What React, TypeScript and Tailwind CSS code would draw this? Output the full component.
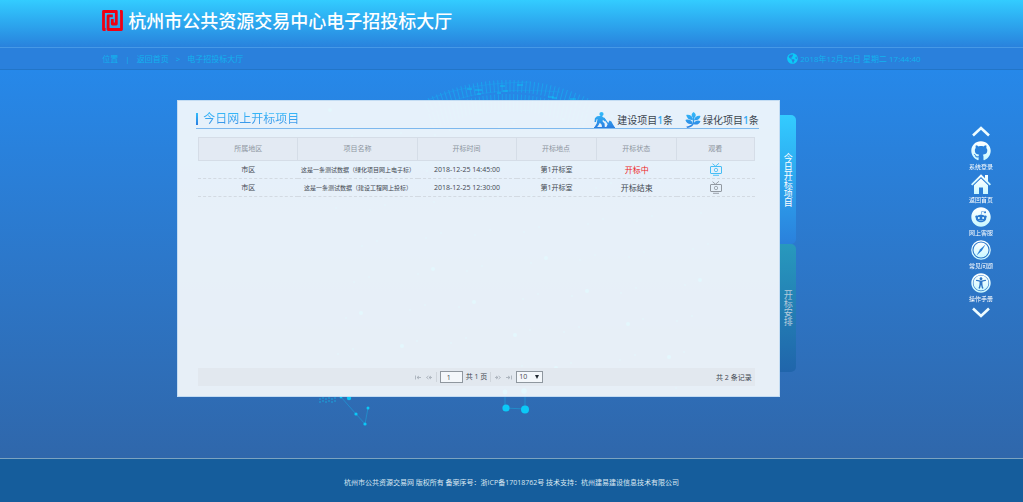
import { useState } from "react";
import { FaGithub, FaReddit, FaUniversalAccess, FaGlobeAmericas } from "react-icons/fa";

const columns = [
  { label: "所属地区", width: "w-[18%]" },
  { label: "项目名称", width: "w-[21.4%]" },
  { label: "开标时间", width: "w-[17.8%]" },
  { label: "开标地点", width: "w-[14.4%]" },
  { label: "开标状态", width: "w-[14.4%]" },
  { label: "观看", width: "w-[14%]" },
];

const rows = [
  {
    area: "市区",
    name: "这是一条测试数据（绿化项目网上电子标）",
    time: "2018-12-25 14:45:00",
    place: "第1开标室",
    status: "开标中",
    live: true,
  },
  {
    area: "市区",
    name: "这是一条测试数据（建设工程网上投标）",
    time: "2018-12-25 12:30:00",
    place: "第1开标室",
    status: "开标结束",
    live: false,
  },
];

function Gradients() {
  return (
    <svg className="absolute size-0" aria-hidden="true">
      <defs>
        <linearGradient id="ice" x1="0" y1="0" x2="0" y2="1">
          <stop offset="0" stopColor="#ffffff" />
          <stop offset="1" stopColor="#c8f8ff" />
        </linearGradient>
        <linearGradient id="sky" gradientUnits="userSpaceOnUse" x1="0" y1="0" x2="0" y2="16">
          <stop offset="0" stopColor="#33bdfb" />
          <stop offset="1" stopColor="#2a7de0" />
        </linearGradient>
      </defs>
    </svg>
  );
}

function Logo() {
  return (
    <svg viewBox="0 0 21 21" className="size-[21px]" fill="none" stroke="#f00012" strokeWidth="2.8" strokeLinejoin="round" aria-hidden="true">
      <path d="M3.600 19.500H1.500V1.500H14.300V14H10.300V9" />
      <path d="M18 1.500H19.500V19.500H6.100V5.800H10.800" />
    </svg>
  );
}

function Globe() {
  const ticks = Array.from({ length: 42 }, (_, i) => {
    const t = -1 + (i * 2) / 41;
    const x = 508 + t * 84;
    const y = 10 + t * t * 20;
    return { x, y, lean: t * 5 };
  });
  const specks = Array.from({ length: 110 }, (_, i) => ({
    x: 330 + ((i * 97) % 380),
    y: 40 + ((i * 61) % 280),
    r: i % 9 === 0 ? 2 : 0.8,
  }));
  return (
    <svg viewBox="0 0 1023 388" className="absolute inset-x-0 top-0 w-full" fill="#0bc9f7" stroke="#0bc9f7" aria-hidden="true">
      <g fill="none" opacity="0.4" strokeWidth="1">
        {ticks.map((k, i) => (
          <path key={i} d={`M${k.x} ${k.y}L${k.x - k.lean} ${k.y + 12}M${k.x - k.lean} ${k.y + 14}L${k.x - k.lean * 2} ${k.y + 30}`} />
        ))}
        <path d="M428 30Q465 13 530 12M450 32Q490 16 560 22" strokeWidth="0.5" />
      </g>
      <path d="M467 19h5M475 20h7M477 24h4M500 16h5M503 21h5M497 23h4M517 15h6M548 27h6M552 28h5M570 29h6" fill="none" opacity="0.8" />
      <g stroke="none">
        {specks.map((s, i) => (
          <circle key={i} cx={s.x} cy={s.y} r={s.r} />
        ))}
      </g>
      <g stroke="none" opacity="0.8">
        {[0, 1, 2, 3, 4, 5, 6, 7, 8, 9, 10, 11].map((i) => (
          <circle key={i} cx={320 + (i % 6) * 3} cy={329 + Math.floor(i / 6) * 3 - (i % 2)} r="0.7" />
        ))}
      </g>
      <path d="M341 327L356 344L365 354L368 338" fill="none" strokeWidth="0.7" opacity="0.5" />
      <path d="M505 322V338L525 339V320" fill="none" strokeWidth="0.7" opacity="0.5" />
      <g stroke="none">
        <circle cx="341" cy="327" r="1.4" />
        <circle cx="349" cy="328" r="2.2" />
        <circle cx="356" cy="344" r="1.6" />
        <circle cx="365" cy="354" r="1.6" />
        <circle cx="368" cy="338" r="1.5" />
        <circle cx="506" cy="338" r="3.6" />
        <circle cx="525" cy="339.500" r="4" />
        <circle cx="505" cy="322" r="2.4" />
        <circle cx="524" cy="321" r="2.8" />
      </g>
    </svg>
  );
}

function Worker() {
  return (
    <svg viewBox="0 0 21 16" className="h-4 w-[21px]" fill="url(#sky)" aria-hidden="true">
      <circle cx="7.500" cy="2.100" r="2.100" />
      <path d="M3 4.200L7.500 3.800L10.500 6.200L12 8.500L11 9.500L8.800 7.700L8.600 9.500L10.600 11.500L10.800 15.500H8L7.700 12.700L5.800 10.700L4.600 13L2.800 15.500H.3L2.700 11.500L3.500 7L2.500 7.500L2 10H.5L.9 6.200Z" />
      <path d="M10.300 5.500L15.700 13L14.800 13.700L9.600 6.500Z" />
      <path d="M12 15.800L14 11.500L15.500 8.500L17.400 9.500L18.700 12L21 15.800Z" />
      <path d="M0 15H21V16H0Z" />
    </svg>
  );
}

function Leaf() {
  return (
    <svg viewBox="0 0 16 16" className="size-4" fill="url(#sky)" aria-hidden="true">
      <path d="M8.500 0C11.400 1.600 11.400 4.400 8.800 6.300C6 4.400 6 1.600 8.500 0Z" />
      <path d="M1.200 3C4.800 2.200 7.700 4.300 8.200 7.800C4.800 8.500 1.900 6.600 1.200 3Z" />
      <path d="M15.500 4C12.200 3.200 9.500 5 9 8.200C12 8.900 14.700 7.400 15.500 4Z" />
      <path d="M.4 8C4 6.700 7 8.300 7.800 11.400C4.500 12.800 1.500 11.500 .4 8Z" />
      <path d="M15.500 9.200C12.400 7.700 9.500 9 8.400 11.900C11.300 13.400 14.200 12.400 15.500 9.200Z" />
      <path d="M7.900 4H9.100L9.200 11Q8.200 14.800 2.500 16L1.100 14.800Q7.200 13.500 7.700 10.500Z" />
    </svg>
  );
}

function House() {
  return (
    <svg viewBox="0 0 20 20" className="size-5" fill="url(#ice)" aria-hidden="true">
      <path d="M10 .3L14 4.200V1H17V7.200L20 10.200L18.700 11.500L10 3L1.300 11.500L0 10.200Z" />
      <path d="M10 4.500L17 11.300V20H12V13.500H8V20H3V11.300Z" />
    </svg>
  );
}

function Tv({ live }: { live: boolean }) {
  return (
    <svg viewBox="0 0 12 13" className={live ? "h-[13px] w-3 text-[#45bdf5]" : "h-[13px] w-3 text-[#9299a1]"} fill="none" stroke="currentColor" strokeWidth="1" aria-hidden="true">
      <rect x="0.500" y="3.500" width="11" height="7" rx="0.500" />
      <path d="M2.500 .7L5.500 3.200L9 .3M3 12.300H9" strokeWidth="0.900" />
      <circle cx="6" cy="7" r="1.700" strokeWidth="0.800" />
    </svg>
  );
}

function Compass() {
  return (
    <svg viewBox="0 0 20 20" className="size-5" aria-hidden="true">
      <circle cx="10" cy="10" r="9.200" fill="none" stroke="url(#ice)" strokeWidth="1.200" />
      <circle cx="10" cy="10" r="7.500" fill="url(#ice)" />
      <path d="M14.500 4.500L10.800 10.800L5.500 15.500L9.200 9.200Z" fill="#2a7fd8" />
    </svg>
  );
}

function Chevron({ down }: { down?: boolean }) {
  return (
    <svg viewBox="0 0 18 11" className="h-[11px] w-[18px]" fill="none" stroke="#eefcff" strokeWidth="2.600" aria-hidden="true">
      <path d={down ? "M1 1.500L9 9L17 1.500" : "M1 9.500L9 2L17 9.500"} />
    </svg>
  );
}

const shortcuts = [
  { label: "系统登录", icon: <FaGithub className="size-5 fill-[url(#ice)]" /> },
  { label: "返回首页", icon: <House /> },
  { label: "网上客服", icon: <FaReddit className="size-5 fill-[url(#ice)]" /> },
  { label: "常见问题", icon: <Compass /> },
  { label: "操作手册", icon: <FaUniversalAccess className="size-5 fill-[url(#ice)]" /> },
];

function PageButton({ label, path }: { label: string; path: string }) {
  return (
    <button type="button" aria-label={label} className="px-px text-[#a3abb5]">
      <svg viewBox="0 0 6 5" className="h-[5px] w-1.5" fill="none" stroke="currentColor" strokeWidth="0.800" aria-hidden="true">
        <path d={path} />
      </svg>
    </button>
  );
}

export default function App() {
  const [page, setPage] = useState("1");
  const [size, setSize] = useState("10");
  return (
    <div className="flex min-h-screen flex-col bg-[#2f67ab] font-['Open_Sans','Noto_Sans_CJK_SC',sans-serif]">
      <Gradients />
      <header>
        <div className="bg-linear-to-b from-[#33ccff] to-[#2982dd]">
          <div className="mx-auto flex h-[47px] w-4/5 items-start gap-[5px] pt-2.5">
            <Logo />
            <h1 className="text-[18px] leading-[23px] font-medium text-white">杭州市公共资源交易中心电子招投标大厅</h1>
          </div>
        </div>
        <div className="border-t border-b border-t-[#4699e6] border-b-[#2275c8] bg-[#2a80dc]">
          <div className="mx-auto flex h-[21px] w-4/5 items-center justify-between text-[8px] leading-3 text-[#12b2ef]">
            <nav aria-label="位置" className="flex items-center gap-[7px]">
              <span>位置</span>
              <span>|</span>
              <a href="#home">返回首页</a>
              <span>&gt;</span>
              <a href="#hall">电子招投标大厅</a>
            </nav>
            <p className="flex items-center gap-0.5">
              <FaGlobeAmericas className="size-[11px] text-[#0bcaf8]" />
              2018年12月25日 星期二 17:44:40
            </p>
          </div>
        </div>
      </header>

      <main className="relative flex-1 bg-linear-to-b from-[#2688e9] to-[#2f67ab]">
        <Globe />
        <div className="relative mx-auto flex w-4/5 items-start pt-[30px] pr-[125px] pb-[61px] pl-[75px]">
          <section className="flex min-h-[297px] flex-1 flex-col border border-[#c3dcf3] bg-[#fafcfd]/91 pt-2.5 pr-6 pb-2.5 pl-5">
            <div className="-mr-1 -ml-0.5 flex items-end justify-between border-b border-[#7db8ee]">
              <div className="flex items-center gap-[5px] pb-px">
                <span className="h-3 w-0.5 bg-linear-to-b from-[#33bdfb] to-[#2a7de0]" />
                <h2 className="bg-linear-to-b from-[#33bdfb] to-[#3a8be4] bg-clip-text text-[12px] leading-4 text-transparent">今日网上开标项目</h2>
              </div>
              <ul className="flex gap-3 text-[10px] leading-4 text-[#3c4650]">
                <li className="flex items-end gap-0.5">
                  <Worker />
                  <span>建设项目<b className="font-semibold text-[#36a9f3]">1</b>条</span>
                </li>
                <li className="flex items-end gap-0.5">
                  <Leaf />
                  <span>绿化项目<b className="font-semibold text-[#36a9f3]">1</b>条</span>
                </li>
              </ul>
            </div>

            <table className="mt-2 w-full table-fixed border-separate border-spacing-0 text-center text-[7px] leading-[10px] text-[#3f4750]">
              <thead>
                <tr>
                  {columns.map((c) => (
                    <th key={c.label} scope="col" className={`${c.width} h-6 border-y border-r border-[#d5dde7] bg-[#e3eaf3] p-0 font-normal text-[#8d959e] first:border-l`}>
                      {c.label}
                    </th>
                  ))}
                </tr>
              </thead>
              <tbody>
                {rows.map((r) => (
                  <tr key={r.time} className="h-[18px] *:border-b *:border-dashed *:border-[#d3dae2] *:p-0">
                    <td>{r.area}</td>
                    <td className="text-[6px] whitespace-nowrap">{r.name}</td>
                    <td>{r.time}</td>
                    <td>{r.place}</td>
                    <td className={r.live ? "text-[8px] text-[#ee1c25]" : "text-[8px]"}>{r.status}</td>
                    <td>
                      <button type="button" aria-label="观看" className="block w-full">
                        <span className="flex justify-center"><Tv live={r.live} /></span>
                      </button>
                    </td>
                  </tr>
                ))}
              </tbody>
            </table>

            <div className="mt-auto grid h-[18px] grid-cols-[1fr_auto_1fr] items-center bg-[#e2e8ef] pl-1 text-[7px] leading-[10px] text-[#3f4750]">
              <span />
              <div className="flex items-center gap-[3px]">
                <PageButton label="首页" path="M.500 .500V4.500M6 2.500H2M4 1L2 2.500L4 4" />
                <PageButton label="上一页" path="M2.500 1L.500 2.500L2.500 4M5 1L3 2.500L5 4M3 2.500H6" />
                <span className="h-2.5 w-px bg-[#cfd5dc]" />
                <label className="flex items-center gap-[3px]">
                  <input aria-label="页码" value={page} onChange={(e) => setPage(e.target.value)} className="h-3 w-[23px] border border-[#8f979f] bg-[#f3f7fb] px-1.5" />
                  共 1 页
                </label>
                <span className="h-2.5 w-px bg-[#cfd5dc]" />
                <PageButton label="下一页" path="M1 1L3 2.500L1 4M3.500 1L5.500 2.500L3.500 4M0 2.500H3" />
                <PageButton label="末页" path="M5.500 .500V4.500M0 2.500H4M2 1L4 2.500L2 4" />
                <label className="grid items-center">
                  <select aria-label="每页条数" value={size} onChange={(e) => setSize(e.target.value)} className="col-start-1 row-start-1 h-3 w-[27px] appearance-none border border-[#8f979f] bg-[#f3f7fb] pl-0.5">
                    <option>10</option>
                    <option>20</option>
                    <option>50</option>
                  </select>
                  <svg viewBox="0 0 4 4" className="pointer-events-none col-start-1 row-start-1 mr-1 size-1 justify-self-end" fill="#222b33" aria-hidden="true">
                    <path d="M0 0H4L2 4Z" />
                  </svg>
                </label>
              </div>
              <span className="justify-self-end pt-0.5 pr-[3px]">共 2 条记录</span>
            </div>
          </section>

          <div className="mt-[15px] flex flex-col text-[9px] leading-4">
            <button type="button" className="flex h-[129px] w-4 items-center justify-center rounded-r-[5px] bg-linear-to-b from-[#33ccff] to-[#2a80dc] text-white [writing-mode:vertical-rl]">
              今日开标项目
            </button>
            <button type="button" className="flex h-[128px] w-4 items-center justify-center rounded-r-[5px] bg-linear-to-b from-[#2899bd] to-[#2065ab] text-[#b4cbdc] [writing-mode:vertical-rl]">
              开标安排
            </button>
          </div>
        </div>
      </main>

      <footer className="border-t border-[#7ba3c0] bg-[#155d9c] pt-[19px] pb-[15px] text-center text-[7px] leading-[9px] text-[#dbe8f2]">
        <p>杭州市公共资源交易网 版权所有 备案序号：浙ICP备17018762号 技术支持：杭州建易建设信息技术有限公司</p>
      </footer>

      <aside className="fixed top-1/4 right-[30px] flex flex-col items-center gap-0.5">
        <button type="button" aria-label="向上" className="pb-px"><Chevron /></button>
        {shortcuts.map((s) => (
          <a key={s.label} href="#shortcut" className="flex flex-col items-center gap-0.5 pt-px text-[6px] leading-2 text-white">
            {s.icon}
            {s.label}
          </a>
        ))}
        <button type="button" aria-label="向下" className="pt-0.5"><Chevron down /></button>
      </aside>
    </div>
  );
}
